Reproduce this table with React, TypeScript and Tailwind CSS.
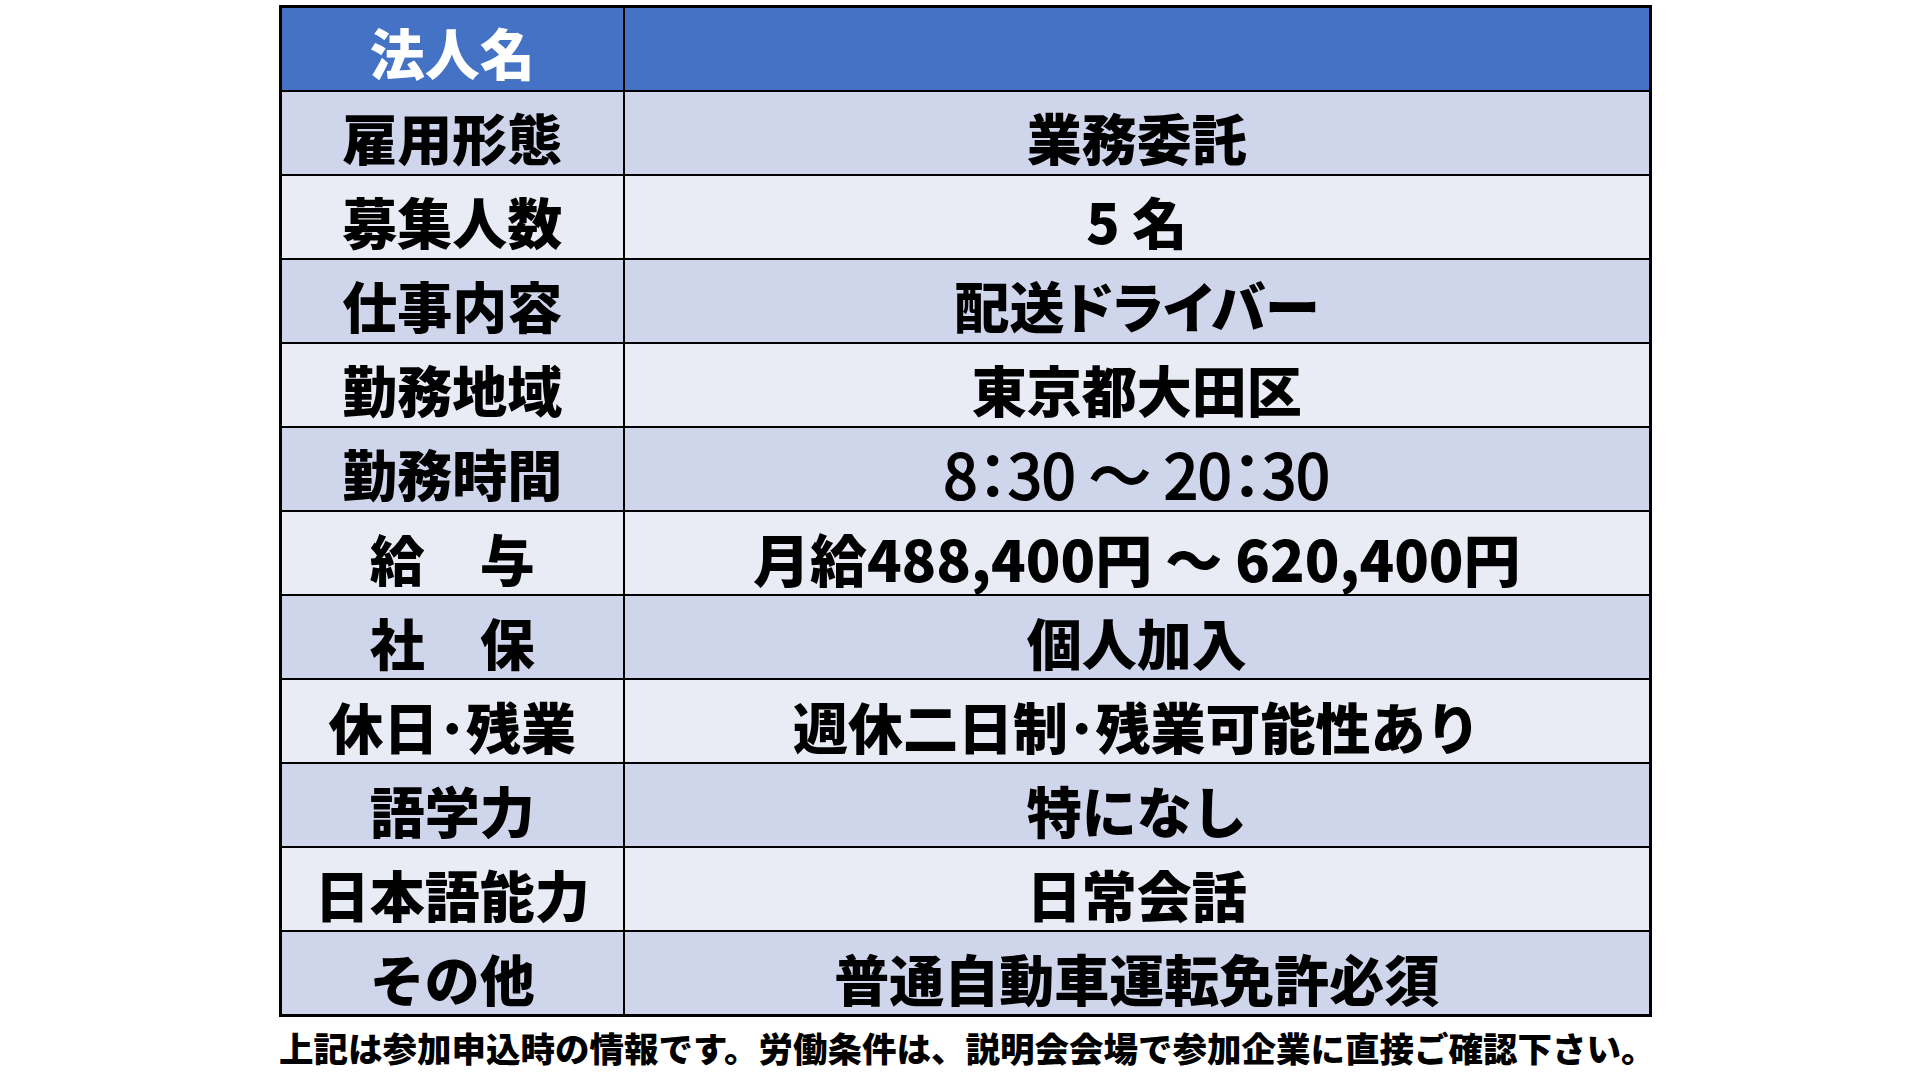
import React from 'react';

interface Row {
    label: string
    value: string
    valueClass?: string
}

const cell = 'border-2 border-black text-center align-middle pt-[8px] leading-none whitespace-nowrap'
const bold = 'text-[55px] font-black'

const rows: Row[] = [
    {label: '雇用形態', value: '業務委託'},
    {label: '募集人数', value: '5 名'},
    {label: '仕事内容', value: '配送ドライバー', valueClass: 'text-[55px] font-black [font-feature-settings:"palt"]'},
    {label: '勤務地域', value: '東京都大田区'},
    {label: '勤務時間', value: '8：30 ～ 20：30', valueClass: 'text-[61px] font-normal [font-feature-settings:"palt"] [-webkit-text-stroke:2px_black]'},
    {label: '給　与', value: '月給488,400円 ～ 620,400円', valueClass: 'text-[57px] font-black'},
    {label: '社　保', value: '個人加入'},
    {label: '休日･残業', value: '週休二日制･残業可能性あり'},
    {label: '語学力', value: '特になし'},
    {label: '日本語能力', value: '日常会話'},
    {label: 'その他', value: '普通自動車運転免許必須'},
]

function App() {
    return (
        <div className="w-[1920px] h-[1080px] bg-white overflow-hidden text-black" style={{fontFamily: '"Noto Sans CJK JP", "Noto Sans", sans-serif'}}>
            <div className="ml-[279px] pt-[5px] w-[1373px]">
                <table className="w-[1373px] h-[1012px] table-fixed border-collapse border-[3px] border-black">
                    <colgroup>
                        <col className="w-[343px]"/>
                        <col/>
                    </colgroup>
                    <tbody>
                        <tr className="bg-[#4472c4] h-[84px]">
                            <td className="border-2 border-black text-center align-middle pt-[6px] text-[55px] font-black leading-none text-white">法人名</td>
                            <td className="border-2 border-black"></td>
                        </tr>
                        {rows.map((row, i) => (
                            <tr key={row.label} className={i % 2 === 0 ? 'bg-[#cfd5ea] h-[84px]' : 'bg-[#e9ebf5] h-[84px]'}>
                                <td className={`${cell} ${bold}`}>
                                    {row.label}
                                </td>
                                <td className={`${cell} ${row.valueClass ?? bold}`}>
                                    {row.value}
                                </td>
                            </tr>
                        ))}
                    </tbody>
                </table>
                <p className="mt-[9px] text-[34.5px] leading-[42px] font-black whitespace-nowrap">
                    上記は参加申込時の情報です。労働条件は、説明会会場で参加企業に直接ご確認下さい。
                </p>
            </div>
        </div>
    );
}

export default App;
